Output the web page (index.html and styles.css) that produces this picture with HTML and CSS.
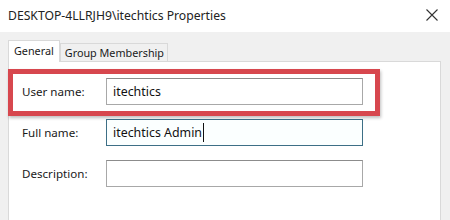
FILE: index.html
```html
<!DOCTYPE html>
<html lang="en">
<head>
    <meta charset="UTF-8">
    <meta name="viewport" content="width=device-width, initial-scale=1.0">
    <title>DESKTOP-4LLRJH9\itechtics Properties</title>
    <link rel="stylesheet" href="styles.css">
</head>
<body>
    <div class="titlebar">
        <span class="title">DESKTOP-4LLRJH9\itechtics Properties</span>
        <svg class="close" width="12" height="12" viewBox="0 0 12 12">
            <path d="M0.5 0.5 L11.5 11.5 M11.5 0.5 L0.5 11.5" stroke="#333" stroke-width="1.1" fill="none"/>
        </svg>
    </div>

    <div class="dialog">
        <div class="tabs">
            <div class="tab active">General</div>
            <div class="tab">Group Membership</div>
        </div>

        <div class="panel">
            <div class="row highlight">
                <label>User name:</label>
                <div class="field">itechtics</div>
            </div>
            <div class="row">
                <label>Full name:</label>
                <div class="field focused">itechtics Admin<span class="caret"></span></div>
            </div>
            <div class="row desc">
                <label>Description:</label>
                <div class="field"></div>
            </div>
        </div>
    </div>
</body>
</html>
```

FILE: styles.css
```css
body {
    margin: 0;
    height: 220px;
    font-family: "Noto Sans", "Open Sans", sans-serif;
    background: #f0f0f0;
    color: #1a1a1a;
    overflow: hidden;
}
.titlebar {
    height: 32px;
    background: #fff;
    display: flex;
    align-items: center;
    justify-content: space-between;
    padding: 0 12px 0 8px;
}
.title {
    font-size: 12.2px;
    color: #222;
    margin-top: -1px;
}
.close {
    margin-top: -2px;
}
.dialog {
    padding: 9px 9px 0 8px;
}
.tabs {
    display: flex;
    align-items: flex-end;
    height: 20px;
    font-size: 10.8px;
}
.tab {
    background: #f0f0f0;
    border: 1px solid #d9d9d9;
    border-bottom: none;
    height: 17px;
    line-height: 17px;
    padding: 0 3px 0 4px;
}
.tab.active {
    background: #fff;
    height: 21px;
    margin-bottom: -1px;
    line-height: 20px;
    padding: 0 5px;
    position: relative;
    z-index: 1;
}
.panel {
    background: #fff;
    border: 1px solid #d9d9d9;
    border-bottom: none;
    height: 158px;
    padding-top: 7px;
}
.row {
    display: flex;
    align-items: center;
    padding-left: 13px;
    margin-top: 14px;
    font-size: 11.6px;
}
.row label {
    width: 84px;
}
.field {
    width: 257px;
    height: 27px;
    box-sizing: border-box;
    border: 1px solid #a8a8a8;
    border-top-color: #8c8c8c;
    padding-left: 6px;
    font-size: 12.4px;
    color: #111;
    display: flex;
    align-items: center;
}
.field.focused {
    border-color: #3d6f86;
    background: #fbffff;
}
.caret {
    display: inline-block;
    width: 1px;
    height: 19px;
    background: #111;
    margin-left: 1px;
}
.highlight {
    margin: 0 0 0 -1px;
    width: 372px;
    box-sizing: border-box;
    border: 5px solid #d7474e;
    box-shadow: 1px 2px 3px rgba(0, 0, 0, 0.25);
    padding: 4px 12px 6px 9px;
}
.highlight + .row {
    margin-top: 3px;
}
```
